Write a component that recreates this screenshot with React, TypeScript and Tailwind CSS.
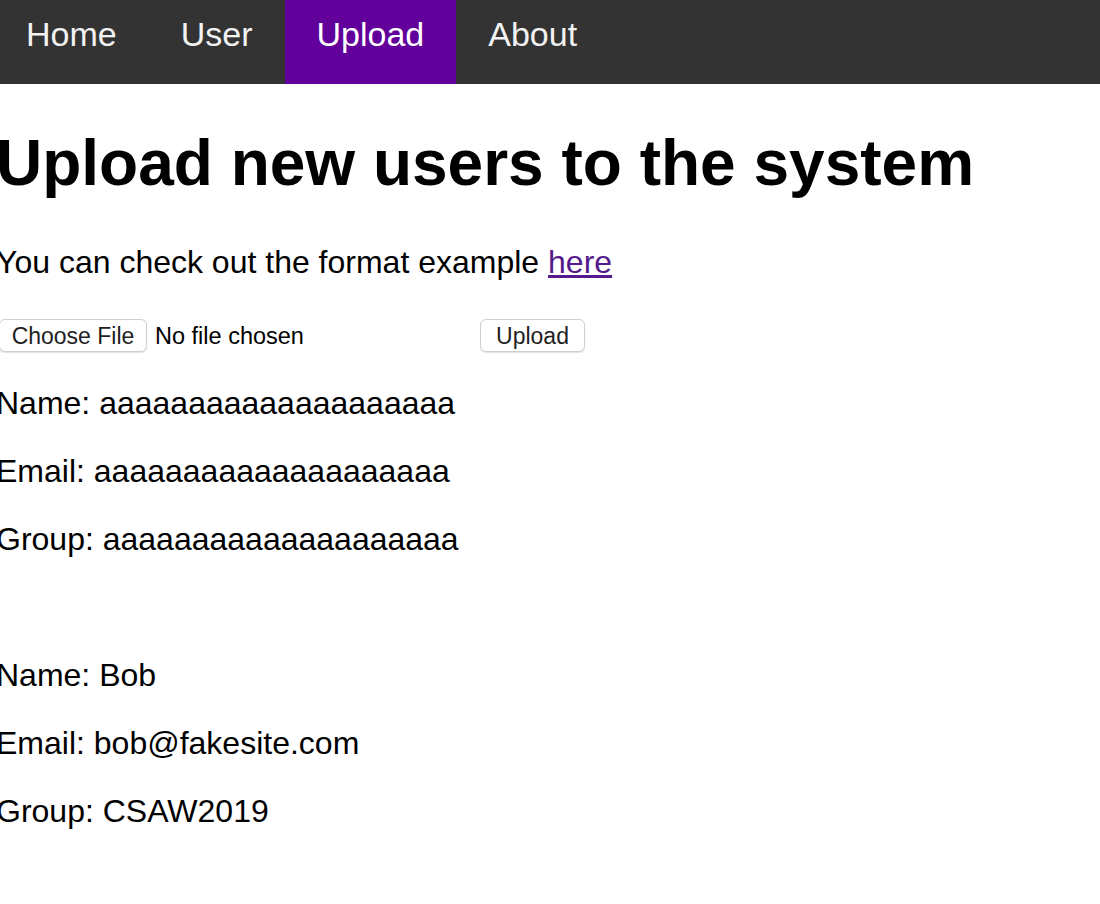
import React from 'react';

const navItems = ['Home', 'User', 'Upload', 'About'];

const users = [
  { name: 'aaaaaaaaaaaaaaaaaaaa', email: 'aaaaaaaaaaaaaaaaaaaa', group: 'aaaaaaaaaaaaaaaaaaaa' },
  { name: 'Bob', email: 'bob@fakesite.com', group: 'CSAW2019' },
];

const App: React.FC = () => {
  return (
    <div className="min-h-[904px] w-[1100px] overflow-hidden bg-white text-black" style={{ fontFamily: '"Liberation Sans", Arial, sans-serif' }}>
      {/* Top navigation */}
      <nav className="flex h-[84px] bg-[#333333]">
        <div className="-ml-[6px] flex">
          {navItems.map((item) => (
            <a
              key={item}
              href="#"
              className={`block h-[84px] px-[32px] pt-[15px] text-[34px] leading-[1.15] text-[#f2f2f2] no-underline ${
                item === 'Upload' ? 'bg-[#61009b] text-white' : ''
              }`}
            >
              {item}
            </a>
          ))}
        </div>
      </nav>

      {/* Page content */}
      <div className="-ml-[4px]">
        <h1 className="mt-[43px] mb-[43px] text-[64px] font-bold leading-[1.15]">
          Upload new users to the system
        </h1>
        <p className="text-[32px] leading-[1.15]">
          You can check out the format example{' '}
          <a href="#" className="text-[#551a8b] underline">here</a>
        </p>

        {/* Upload form */}
        <form className="mt-[32px] flex h-[41px] items-start pt-[7px]">
          <div className="flex h-[33px] w-[474px] items-center">
            <span className="ml-[3px] flex h-[33px] w-[148px] items-center justify-center rounded-[6px] border border-[#cfcfcf] bg-white pt-[2px] text-[23px] leading-none text-[#1f1f1f] shadow-[0_1px_1px_rgba(0,0,0,0.12)]">
              Choose File
            </span>
            <span className="ml-[8px] pt-[2px] text-[23.5px] leading-none">No file chosen</span>
          </div>
          <button
            type="button"
            className="ml-[10px] flex h-[33px] w-[105px] items-center justify-center rounded-[6px] border border-[#cfcfcf] bg-white pt-[2px] text-[23px] leading-none text-[#1f1f1f] shadow-[0_1px_1px_rgba(0,0,0,0.12)]"
          >
            Upload
          </button>
        </form>

        {/* Uploaded users */}
        {users.map((u, i) => (
          <div key={u.email}>
            {i > 0 && <div className="h-[36px]" />}
            <p className="my-[32px] text-[32px] leading-[36px]">Name: {u.name}</p>
            <p className="my-[32px] text-[32px] leading-[36px]">Email: {u.email}</p>
            <p className="my-[32px] text-[32px] leading-[36px]">Group: {u.group}</p>
          </div>
        ))}
      </div>
    </div>
  );
};

export default App;
